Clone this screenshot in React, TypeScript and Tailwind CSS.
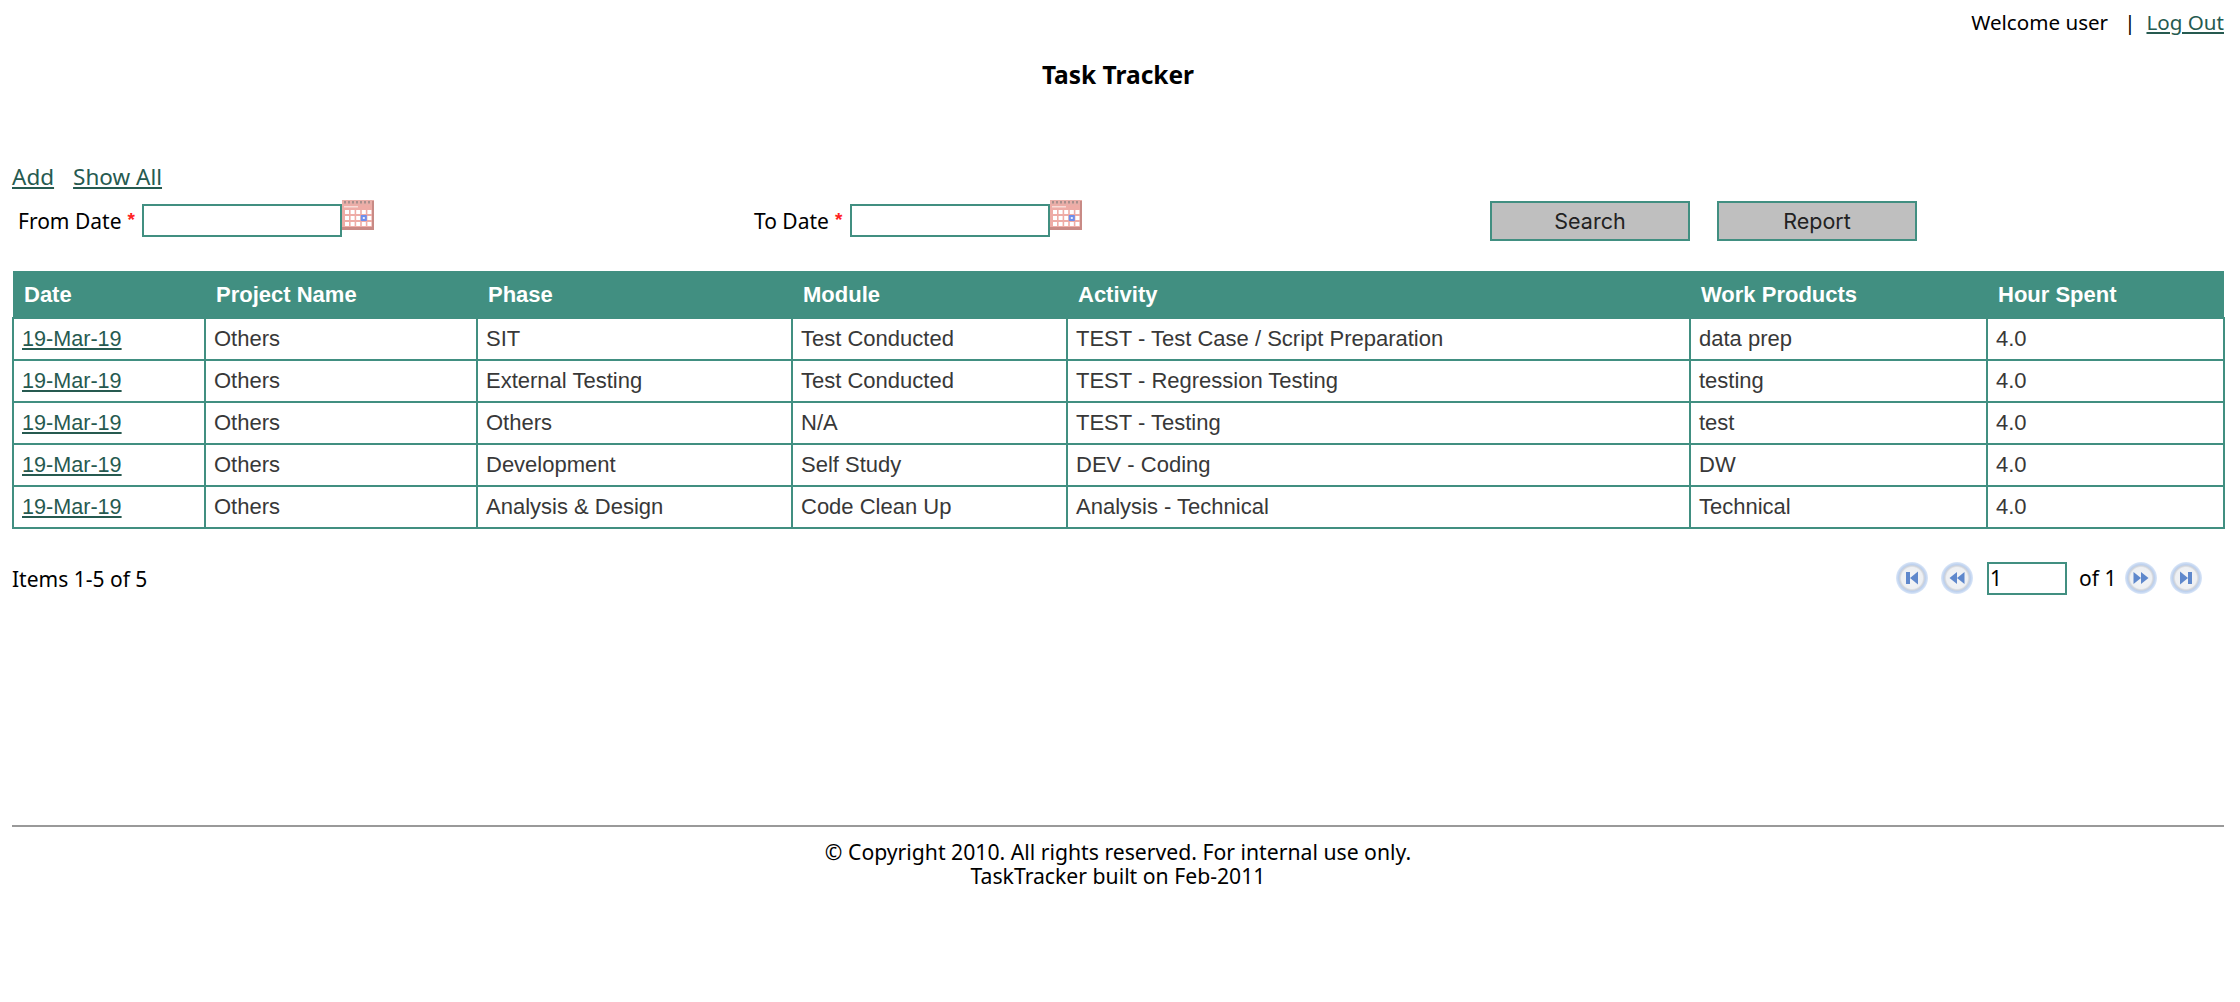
const rows = [
  ["19-Mar-19", "Others", "SIT", "Test Conducted", "TEST - Test Case / Script Preparation", "data prep", "4.0"],
  ["19-Mar-19", "Others", "External Testing", "Test Conducted", "TEST - Regression Testing", "testing", "4.0"],
  ["19-Mar-19", "Others", "Others", "N/A", "TEST - Testing", "test", "4.0"],
  ["19-Mar-19", "Others", "Development", "Self Study", "DEV - Coding", "DW", "4.0"],
  ["19-Mar-19", "Others", "Analysis & Design", "Code Clean Up", "Analysis - Technical", "Technical", "4.0"],
];
const heads = ["Date", "Project Name", "Phase", "Module", "Activity", "Work Products", "Hour Spent"];
const widths = ["w-[192px]", "w-[272px]", "w-[315px]", "w-[275px]", "w-[623px]", "w-[297px]", "w-[237px]"];

function Calendar() {
  const cells = [];
  for (let r = 0; r < 3; r++) {
    for (let c = 0; c < 5; c++) {
      const hit = r === 1 && c === 3;
      cells.push(<rect key={`${r}-${c}`} x={3 + c * 5.6} y={10 + r * 6} width="4" height="4" fill={hit ? "#e4ecff" : "#ffffff"} stroke={hit ? "#6f8fec" : "none"} strokeWidth={hit ? 2 : 0} />);
    }
  }
  return (
    <svg width="32" height="30" viewBox="0 0 32 30" className="shrink-0 self-start blur-[0.5px]">
      <rect x="0" y="0" width="32" height="30" fill="#eeaca6" />
      <rect x="0" y="0" width="32" height="5" fill="#e8aea8" />
      <rect x="30" y="1" width="2" height="29" fill="#c88a85" />
      <rect x="0" y="27" width="32" height="3" fill="#c98a85" />
      <rect x="2" y="6" width="14" height="1.5" fill="#f8dcd8" />
      {[2, 6, 10, 14, 18, 22, 26].map((x) => <rect key={x} x={x} y="1" width="2" height="2.5" fill="#a98f8c" />)}
      {cells}
    </svg>
  );
}

function PagerIcon({ kind, id }: { kind: "first" | "prev" | "next" | "last"; id: string }) {
  return (
    <svg width="32" height="32" viewBox="0 0 32 32" className="shrink-0 blur-[0.6px]">
      <defs>
        <radialGradient id={id} cx="50%" cy="50%" r="50%">
          <stop offset="0%" stopColor="#f4f5f7" />
          <stop offset="66%" stopColor="#eef0f3" />
          <stop offset="76%" stopColor="#cfd3da" />
          <stop offset="84%" stopColor="#bcd0ee" />
          <stop offset="100%" stopColor="#dbe7f8" />
        </radialGradient>
      </defs>
      <circle cx="16" cy="16" r="16" fill={`url(#${id})`} />
      <g fill="#5f88cc">
        {kind === "first" && <><rect x="10" y="10" width="4" height="12" /><path d="M22 9.5 L14 16 L22 22.5 Z" /></>}
        {kind === "prev" && <><path d="M16 10 L8.5 16 L16 22 Z" /><path d="M23.5 10 L16 16 L23.5 22 Z" /></>}
        {kind === "next" && <><path d="M8.5 10 L16 16 L8.5 22 Z" /><path d="M16 10 L23.5 16 L16 22 Z" /></>}
        {kind === "last" && <><path d="M10 9.5 L18 16 L10 22.5 Z" /><rect x="18" y="10" width="4" height="12" /></>}
      </g>
    </svg>
  );
}

const body = "font-['Noto_Sans',sans-serif] text-[21px] leading-[24px] text-black";
const link = "text-[#265a50] underline";

function Star() {
  return <span className="text-[#f22] ml-[6px] font-bold font-['Liberation_Sans',sans-serif] text-[19px] leading-[20px] -mt-[2px]">*</span>;
}

export default function App() {
  return (
    <div className={`${body} bg-white h-[1002px] w-[2240px] overflow-hidden pl-3 pr-4`}>
      <div className="flex justify-end pt-[10px] h-[34px] text-[20.6px]">
        <span>Welcome user</span>
        <span className="ml-[16px]">|</span>
        <a className={`${link} ml-[11px]`}>Log Out</a>
      </div>
      <h1 className="text-center font-bold text-[24.5px] leading-[30px] mt-[26px]">Task Tracker</h1>
      <div className="flex gap-[19px] mt-[74px] text-[22.5px] leading-[26px]">
        <a className={link}>Add</a>
        <a className={link}>Show All</a>
      </div>
      <div className="flex items-start h-[70px] mt-[11px]">
        <div className="flex w-[738px] pl-[6px] pt-[3px]">
          <label className="w-[124px] h-[34px] flex items-center">From Date<Star /></label>
          <input className="w-[200px] h-[33px] border-2 border-[#418f81] outline-none" />
          <div className="-mt-[4px]"><Calendar /></div>
        </div>
        <div className="flex w-[740px] pt-[3px]">
          <label className="w-[100px] h-[34px] flex items-center pl-[4px]">To Date<Star /></label>
          <input className="w-[200px] h-[33px] border-2 border-[#418f81] outline-none" />
          <div className="-mt-[4px]"><Calendar /></div>
        </div>
        <div className="flex gap-[27px]">
          <button className="w-[200px] h-[40px] bg-[#bfbfbf] border-2 border-[#418f81] font-['Inter',sans-serif] text-[21.5px] text-[#222]">Search</button>
          <button className="w-[200px] h-[40px] bg-[#bfbfbf] border-2 border-[#418f81] font-['Inter',sans-serif] text-[21.5px] text-[#222]">Report</button>
        </div>
      </div>
      <table className="table-fixed border-collapse w-[2211px] font-['Liberation_Sans',sans-serif] text-[22px] text-[#383838]">
        <colgroup>{widths.map((w, i) => <col key={i} className={w} />)}</colgroup>
        <thead>
          <tr className="bg-[#418f81] text-white h-[47px]">
            {heads.map((h) => <th key={h} className="text-left font-bold px-[11px] pt-[2px]">{h}</th>)}
          </tr>
        </thead>
        <tbody>
          {rows.map((r, i) => (
            <tr key={i} className="h-[42px]">
              {r.map((c, j) => (
                <td key={j} className="border-2 border-[#418f81] px-[8px]">
                  {j === 0 ? <a className={`${link} text-[21.6px]`}>{c}</a> : c}
                </td>
              ))}
            </tr>
          ))}
        </tbody>
      </table>
      <div className="flex items-center justify-between mt-[32px] h-[34px]">
        <span className="pt-[2px]">Items 1-5 of 5</span>
        <div className="flex items-center pr-[22px]">
          <PagerIcon kind="first" id="a" />
          <div className="ml-[13px]"><PagerIcon kind="prev" id="b" /></div>
          <input readOnly value="1" className="w-[80px] h-[33px] border-2 border-[#418f81] ml-[14px] px-[1px] outline-none" />
          <span className="ml-[12px] w-[46px]">of 1</span>
          <PagerIcon kind="next" id="c" />
          <div className="ml-[13px]"><PagerIcon kind="last" id="d" /></div>
        </div>
      </div>
      <hr className="mt-[230px] border-0 h-[2px] bg-[#999]" />
      <div className="text-center mt-[13px] text-[21.2px]">
        <div>© Copyright 2010. All rights reserved. For internal use only.</div>
        <div>TaskTracker built on Feb-2011</div>
      </div>
    </div>
  );
}
